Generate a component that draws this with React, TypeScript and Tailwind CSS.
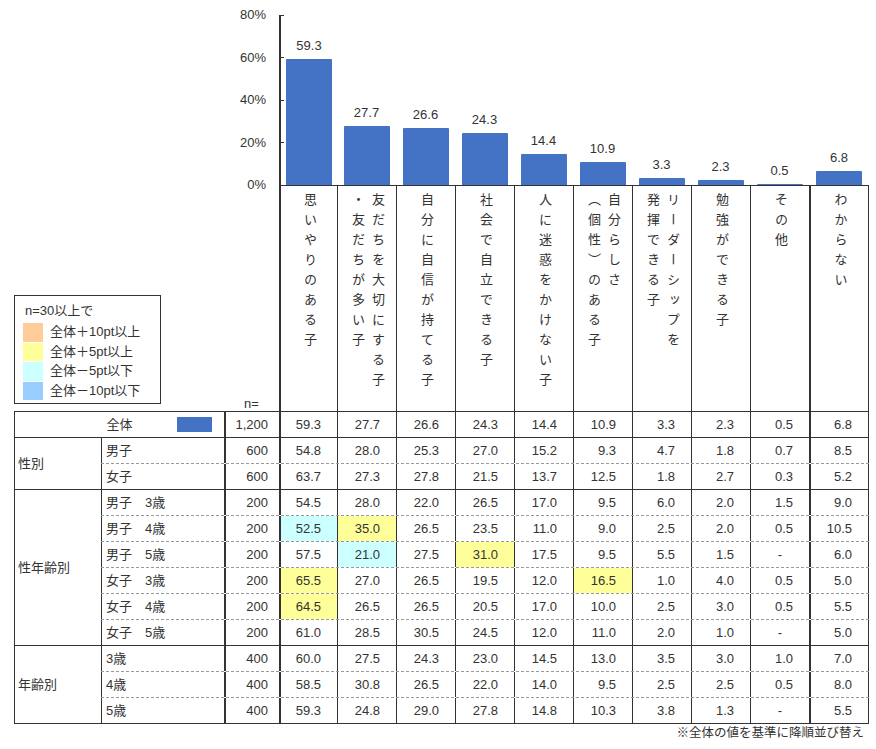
import React from 'react';

type Col = { lines: string[]; v: number };

const COLS: Col[] = [
  { lines: ['思いやりのある子'], v: 59.3 },
  { lines: ['友だちを大切にする子', '・友だちが多い子'], v: 27.7 },
  { lines: ['自分に自信が持てる子'], v: 26.6 },
  { lines: ['社会で自立できる子'], v: 24.3 },
  { lines: ['人に迷惑をかけない子'], v: 14.4 },
  { lines: ['自分らしさ', '（個性）のある子'], v: 10.9 },
  { lines: ['リーダーシップを', '発揮できる子'], v: 3.3 },
  { lines: ['勉強ができる子'], v: 2.3 },
  { lines: ['その他'], v: 0.5 },
  { lines: ['わからない'], v: 6.8 },
];

const DATA_COL = [
  'w-[58px] border-l-2',
  'w-[59px] border-l',
  'w-[59px] border-l',
  'w-[59px] border-l',
  'w-[59px] border-l',
  'w-[59px] border-l',
  'w-[59px] border-l',
  'w-[59px] border-l',
  'w-[59px] border-l',
  'w-[60px] border-l-2 border-r',
];

const PLOT_COL = [
  'w-[58px] border-l-2 border-[#333]',
  'w-[59px]',
  'w-[59px]',
  'w-[59px]',
  'w-[59px]',
  'w-[59px]',
  'w-[59px]',
  'w-[59px]',
  'w-[59px]',
  'w-[60px]',
];

type Row = { label: string; n: string; vals: string[] };

const TOTAL: Row = {
  label: '全体',
  n: '1,200',
  vals: ['59.3', '27.7', '26.6', '24.3', '14.4', '10.9', '3.3', '2.3', '0.5', '6.8'],
};

const GROUPS: { cat: string; rows: Row[] }[] = [
  {
    cat: '性別',
    rows: [
      { label: '男子', n: '600', vals: ['54.8', '28.0', '25.3', '27.0', '15.2', '9.3', '4.7', '1.8', '0.7', '8.5'] },
      { label: '女子', n: '600', vals: ['63.7', '27.3', '27.8', '21.5', '13.7', '12.5', '1.8', '2.7', '0.3', '5.2'] },
    ],
  },
  {
    cat: '性年齢別',
    rows: [
      { label: '男子　3歳', n: '200', vals: ['54.5', '28.0', '22.0', '26.5', '17.0', '9.5', '6.0', '2.0', '1.5', '9.0'] },
      { label: '男子　4歳', n: '200', vals: ['52.5', '35.0', '26.5', '23.5', '11.0', '9.0', '2.5', '2.0', '0.5', '10.5'] },
      { label: '男子　5歳', n: '200', vals: ['57.5', '21.0', '27.5', '31.0', '17.5', '9.5', '5.5', '1.5', '-', '6.0'] },
      { label: '女子　3歳', n: '200', vals: ['65.5', '27.0', '26.5', '19.5', '12.0', '16.5', '1.0', '4.0', '0.5', '5.0'] },
      { label: '女子　4歳', n: '200', vals: ['64.5', '26.5', '26.5', '20.5', '17.0', '10.0', '2.5', '3.0', '0.5', '5.5'] },
      { label: '女子　5歳', n: '200', vals: ['61.0', '28.5', '30.5', '24.5', '12.0', '11.0', '2.0', '1.0', '-', '5.0'] },
    ],
  },
  {
    cat: '年齢別',
    rows: [
      { label: '3歳', n: '400', vals: ['60.0', '27.5', '24.3', '23.0', '14.5', '13.0', '3.5', '3.0', '1.0', '7.0'] },
      { label: '4歳', n: '400', vals: ['58.5', '30.8', '26.5', '22.0', '14.0', '9.5', '2.5', '2.5', '0.5', '8.0'] },
      { label: '5歳', n: '400', vals: ['59.3', '24.8', '29.0', '27.8', '14.8', '10.3', '3.8', '1.3', '-', '5.5'] },
    ],
  },
];

const CYAN = 'bg-[#ccffff]';
const YELLOW = 'bg-[#ffff99]';

const HL: Record<string, Record<number, string>> = {
  '男子　4歳': { 0: CYAN, 1: YELLOW },
  '男子　5歳': { 1: CYAN, 3: YELLOW },
  '女子　3歳': { 0: YELLOW, 5: YELLOW },
  '女子　4歳': { 0: YELLOW },
};

const LEGEND = [
  { c: 'bg-[#ffcc99]', t: '全体＋10pt以上' },
  { c: 'bg-[#ffff99]', t: '全体＋5pt以上' },
  { c: 'bg-[#ccffff]', t: '全体－5pt以下' },
  { c: 'bg-[#99ccff]', t: '全体－10pt以下' },
];

const SCALE = 170 / 80;

function Cells({ row }: { row: Row }) {
  const hl = HL[row.label] || {};
  return (
    <>
      <div className="w-[55px] h-full border-l-2 border-[#333] flex items-center justify-end pr-[11px]">{row.n}</div>
      {row.vals.map((v, i) => (
        <div
          key={i}
          className={`${DATA_COL[i]} h-full border-[#333] flex items-center ${
            v === '-' ? 'justify-center' : 'justify-end pr-[16px]'
          } ${hl[i] ?? ''}`}
        >
          {v}
        </div>
      ))}
    </>
  );
}

export default function App() {
  return (
    <div className="w-[876px] h-[749px] overflow-hidden bg-white text-[#333] text-[13px] font-['Liberation_Sans','Noto_Sans_CJK_JP',sans-serif] pl-[14px]">
      {/* Chart */}
      <div className="flex items-start h-[186px]">
        <div className="w-[265px] mt-[8px] h-[184px] flex flex-col justify-between items-end pr-[13px]">
          {['80%', '60%', '40%', '20%', '0%'].map((t) => (
            <div key={t} className="h-[14px] leading-[14px]">
              {t}
            </div>
          ))}
        </div>
        <div className="relative mt-[15px] h-[171px] flex border-b border-[#333]">
          <div className="absolute left-[2px] top-0 w-[3px] h-px bg-[#333]" />
          <div className="absolute left-[2px] top-[42px] w-[3px] h-px bg-[#333]" />
          <div className="absolute left-[2px] top-[85px] w-[3px] h-px bg-[#333]" />
          <div className="absolute left-[2px] top-[127px] w-[3px] h-px bg-[#333]" />
          {COLS.map((c, i) => (
            <div key={i} className={`${PLOT_COL[i]} h-full flex flex-col justify-end items-center`}>
              <div className="leading-[14px] mb-[6px]">{c.v.toFixed(1)}</div>
              <div className="w-[46px] bg-[#4472c4] rounded-t-[1px]" style={{ height: `${c.v * SCALE}px` }} />
            </div>
          ))}
        </div>
      </div>

      {/* Labels + legend */}
      <div className="flex h-[225px]">
        <div className="w-[210px] flex items-end">
          <div className="w-[147px] h-[109px] border border-[#333] mb-[7px] pl-[8px] pt-[7px]">
            <div className="pl-[2px] leading-[16px]">n=30以上で</div>
            <div className="mt-[4px] flex flex-col gap-[1px]">
              {LEGEND.map((l) => (
                <div key={l.t} className="flex items-center h-[18.5px]">
                  <span className={`w-[20px] h-full ${l.c}`} />
                  <span className="ml-[7px] leading-[16px]">{l.t}</span>
                </div>
              ))}
            </div>
          </div>
        </div>
        <div className="w-[55px] flex items-end justify-center leading-[14px]">n=</div>
        {COLS.map((c, i) => (
          <div key={i} className={`${DATA_COL[i]} h-full border-[#333] flex justify-center pt-[7px]`}>
            <div className="[writing-mode:vertical-rl] tracking-[7px] leading-[20px]">
              {c.lines[0]}
              {c.lines[1] && (
                <>
                  <br />
                  {c.lines[1]}
                </>
              )}
            </div>
          </div>
        ))}
      </div>

      {/* Table */}
      <div className="w-[855px] border-t border-[#333]">
        <div className="flex h-[26px] border-b border-[#333]">
          <div className="w-[210px] h-full border-l border-[#333] grid grid-cols-[1fr_auto_1fr] items-center">
            <span />
            <span>全体</span>
            <span className="justify-self-end mr-[12px] w-[35px] h-[15px] bg-[#4472c4]" />
          </div>
          <Cells row={TOTAL} />
        </div>
        {GROUPS.map((g) => (
          <div key={g.cat} className="flex border-b border-[#333]">
            <div className="w-[87px] border-l border-[#333] flex items-center pl-[3px]">{g.cat}</div>
            <div className="flex flex-col">
              {g.rows.map((r, ri) => (
                <div
                  key={r.label}
                  className={
                    ri < g.rows.length - 1
                      ? 'flex h-[26px] border-b border-dashed border-[#999]'
                      : 'flex h-[25px]'
                  }
                >
                  <div className="w-[123px] h-full border-l border-[#333] flex items-center pl-[4px]">{r.label}</div>
                  <Cells row={r} />
                </div>
              ))}
            </div>
          </div>
        ))}
      </div>
      <div className="w-[855px] text-right pr-[5px] text-[12.5px] leading-[16px] mt-[1px]">
        ※全体の値を基準に降順並び替え
      </div>
    </div>
  );
}
